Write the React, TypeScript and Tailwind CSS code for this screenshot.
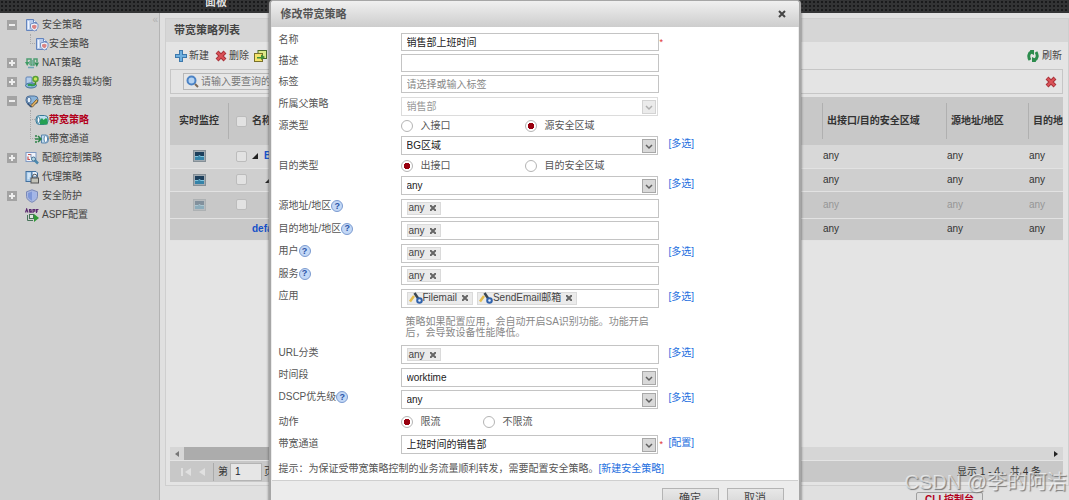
import { ReactNode } from "react";
import clsx from "clsx";

type IconName =
  | "policy"
  | "nat"
  | "balance"
  | "bandwidth"
  | "bwPolicy"
  | "channel"
  | "quota"
  | "proxy"
  | "shield"
  | "aspf";

type TreeNode = {
  label: string;
  icon: IconName;
  state?: "open" | "closed";
  child?: boolean;
  last?: boolean;
  active?: boolean;
};

const tree: TreeNode[] = [
  { label: "安全策略", icon: "policy", state: "open" },
  { label: "安全策略", icon: "policy", child: true, last: true },
  { label: "NAT策略", icon: "nat", state: "closed" },
  { label: "服务器负载均衡", icon: "balance", state: "closed" },
  { label: "带宽管理", icon: "bandwidth", state: "open" },
  { label: "带宽策略", icon: "bwPolicy", child: true, active: true },
  { label: "带宽通道", icon: "channel", child: true, last: true },
  { label: "配额控制策略", icon: "quota", state: "closed" },
  { label: "代理策略", icon: "proxy" },
  { label: "安全防护", icon: "shield", state: "closed" },
  { label: "ASPF配置", icon: "aspf" },
];

const iconShapes: Record<IconName, ReactNode> = {
  policy: (
    <>
      <path d="M1.500 1.500h7l3 3v8h-10z" fill="#b5caec" stroke="#6384bd" />
      <path d="M8.500 1.500v3h3" fill="#f4f8ff" stroke="#6384bd" />
      <path d="M3.500 3v8" stroke="#f1f6ff" strokeWidth="1.500" />
      <path d="M5.500 6l4-1 3.500 1v3c0 2-2 3-3.500 4-2-1-4-2-4-4z" fill="#eef2fa" stroke="#7a92c4" />
      <path d="M7 7.500l2.500-.8 2 .8v1.300c0 1.200-1 1.800-2 2.500-1.300-.7-2.500-1.300-2.500-2.500z" fill="#d98484" />
    </>
  ),
  nat: (
    <>
      <path d="M2 7V3h4v6h3V3h3v3" fill="none" stroke="#4d9d70" strokeWidth="1.500" />
      <path d="M0 6h4.500L2.200 10z" fill="#3f9c64" />
      <path d="M9.500 6.500H14L11.800 11z" fill="#2f8a55" />
      <path d="M3 11.500h6" stroke="#6fa7b5" strokeWidth="1.500" />
      <path d="M4.500 5v4M7.500 4v6" stroke="#79b3a0" />
    </>
  ),
  balance: (
    <>
      <rect x="1" y="2" width="6" height="8" rx="1" fill="#b4cdeb" stroke="#5f83b5" />
      <ellipse cx="6" cy="10.500" rx="5.500" ry="2.500" fill="#8db8dd" stroke="#3f6f9a" />
      <path d="M3 10.500c2-2 4 1 7-1" fill="none" stroke="#2f9a4a" strokeWidth="2" />
      <circle cx="10.500" cy="4" r="2.500" fill="#cbe55a" stroke="#58a035" strokeWidth="1.500" />
      <path d="M10.500 7v3" stroke="#4b8a22" strokeWidth="1.500" />
    </>
  ),
  bandwidth: (
    <>
      <rect x="1" y="2" width="12" height="8" rx="3.500" fill="#8ab4da" stroke="#4f7099" />
      <ellipse cx="4" cy="6" rx="2" ry="3" fill="#e2effb" stroke="#4f7099" />
      <path d="M5 12.500l6.500-7L13 7l-5.500 6z" fill="#e3b262" stroke="#7d6338" />
      <path d="M2.500 9.500l4 3.500" stroke="#2f4f78" strokeWidth="1.500" />
    </>
  ),
  bwPolicy: (
    <>
      <rect x="1" y="2.500" width="12" height="9" rx="3.500" fill="#bfe0f0" stroke="#3a7a98" />
      <path d="M5 11.500V7l2-2 1.500 2L11 5l1.500 1.500v5z" fill="#25a052" />
      <ellipse cx="3.500" cy="7" rx="1.500" ry="3" fill="#fff" stroke="#3a7a98" />
    </>
  ),
  channel: (
    <>
      <path d="M6.500 3H11a2.500 4 0 0 1 0 8H6.500z" fill="#c2dcf0" stroke="#5a86ad" />
      <ellipse cx="10.800" cy="7" rx="1.800" ry="3.500" fill="#fff" stroke="#5a86ad" />
      <path d="M0 4h2M0 10h2M0 7h6M3 4l3 3-3 3" fill="none" stroke="#2c8247" strokeWidth="1.500" />
    </>
  ),
  quota: (
    <>
      <rect x="1" y="1.500" width="10" height="9" fill="#f1f4fa" stroke="#7f9ac4" />
      <path d="M3 3.500h3M3 5.500v3h2" fill="none" stroke="#c65252" strokeWidth="1.200" />
      <path d="M6 3v3.500h3" fill="none" stroke="#8296b8" />
      <path d="M8 7.500l5 5" stroke="#4b88ad" strokeWidth="2.500" />
      <circle cx="8.500" cy="8" r="2" fill="#b5d8e8" stroke="#4b7695" />
    </>
  ),
  proxy: (
    <>
      <rect x="1" y="1.500" width="6" height="10" fill="#a8cbea" stroke="#41709f" />
      <path d="M2.500 4h3M2.500 6h3M2.500 8h2" stroke="#fff" />
      <path d="M7 1.500h4l1.500 1.500v4H7z" fill="#e7f0fa" stroke="#41709f" />
      <rect x="6" y="8" width="7.500" height="5" fill="#c2c2b8" stroke="#555" />
      <path d="M7.500 8V6.500a2 2 0 0 1 4.500 0V8" fill="none" stroke="#555" />
    </>
  ),
  shield: (
    <>
      <path d="M7 .800l5.500 2v4.500c0 3-3 5-5.500 6-2.500-1-5.500-3-5.500-6V2.800z" fill="#a9b8e0" stroke="#7a89b8" />
      <path d="M7 2.500l4 1.400v3.400c0 2-2 3.500-4 4.400z" fill="#a3b6e8" />
      <path d="M7 2.500L3 3.900v3.400c0 2 2 3.500 4 4.400z" fill="#7e97d8" />
    </>
  ),
  aspf: (
    <>
      <path d="M.5 4.500L1.700 1l1.200 3.500M6.500 1.500h-2v1.300h1.800v1.400H4.300M8 5V1.500h1.800v1.600H8M11.500 5V1.500h2M11.500 3H13" fill="none" stroke="#5b2a70" strokeWidth="1.200" />
      <path d="M2.500 7v5.500H8" fill="none" stroke="#48735a" />
      <rect x="4.500" y="6.500" width="4" height="4" fill="#dfe9df" stroke="#48735a" />
      <path d="M9 6l5 4-5 4z" fill="#2f9a35" />
    </>
  ),
};

function TreeIcon({ name }: { name: IconName }) {
  return (
    <svg viewBox="0 0 14 14" className="size-[14px] shrink-0" aria-hidden="true">
      {iconShapes[name]}
    </svg>
  );
}

function Sidebar() {
  return (
    <nav className="relative w-[160px] shrink-0 border-r border-[#b4b4b4] bg-[#d0d0d0] pt-[2px]">
      <button
        type="button"
        aria-label="收起"
        className="absolute top-[2px] right-[1px] text-[10px] leading-[10px] text-[#b0b0b0]"
      >
        «
      </button>
      <ul>
        {tree.map((n, i) => (
          <li key={i} className="flex h-[19px] items-center pl-[7px]">
            {n.child ? (
              <span className="flex h-full w-[28px] flex-col items-end pl-[23px]">
                <span className="h-1/2 w-full border-b border-l border-dotted border-[#aaa]" />
                <span
                  className={clsx(
                    "h-1/2 w-full border-l border-dotted",
                    n.last ? "border-transparent" : "border-[#aaa]"
                  )}
                />
              </span>
            ) : (
              <span className="flex w-[18px]">
                {n.state && (
                  <button
                    type="button"
                    aria-label={n.state === "open" ? "折叠" : "展开"}
                    className="size-[10px] bg-[#a3a3a3]"
                  >
                    <svg viewBox="0 0 10 10" className="size-[10px]">
                      <path
                        d={n.state === "open" ? "M2 5h6" : "M2 5h6M5 2v6"}
                        stroke="#eee"
                        strokeWidth="2"
                      />
                    </svg>
                  </button>
                )}
              </span>
            )}
            <TreeIcon name={n.icon} />
            <a
              href="#"
              className={clsx(
                "whitespace-nowrap",
                !n.child && "pl-[3px]",
                n.active ? "font-bold text-[#b3001b]" : "text-[#444]"
              )}
            >
              {n.label}
            </a>
          </li>
        ))}
      </ul>
    </nav>
  );
}

function RedCross() {
  return (
    <svg viewBox="0 0 12 12" className="size-[12px]" aria-hidden="true">
      <path d="M2 2l8 8M10 2l-8 8" stroke="#a8323a" strokeWidth="4" />
      <path d="M2.500 2.500l7 7M9.500 2.500l-7 7" stroke="#dc5358" strokeWidth="2" />
    </svg>
  );
}

type RowData = { name?: string; level: number; dim?: boolean; height: string; bg: string };

const rows: RowData[] = [
  { name: "BG区域", level: 0, height: "h-[23px]", bg: "bg-[#d8d8d8]" },
  { name: "销售部", level: 1, height: "h-[23px]", bg: "bg-[#cfcfcf]" },
  { name: "", level: 2, dim: true, height: "h-[27px]", bg: "bg-[#c8c8c8]" },
  { name: "default", level: -1, height: "h-[22px]", bg: "bg-[#c8c8c8]" },
];

function Monitor({ dim }: { dim?: boolean }) {
  return (
    <svg
      viewBox="0 0 13 12"
      className={clsx("mx-auto h-[12px] w-[13px]", dim && "opacity-40")}
      aria-hidden="true"
    >
      <rect x=".5" y=".5" width="12" height="11" fill="#a2abb2" stroke="#858f96" />
      <rect x="2" y="2" width="9" height="8" fill="#1c3f5c" />
      <path d="M2 6h9v4H2z" fill="#3583a8" />
      <path d="M2 6.500h3l1-1 2 1h3" fill="none" stroke="#7fc4dd" />
    </svg>
  );
}

function HeadCell({ children }: { children: ReactNode }) {
  return (
    <th className="p-0 text-left font-bold">
      <span className="flex h-[36px] items-center overflow-hidden border-l border-[#b0b0b0] pl-1 whitespace-nowrap">
        {children}
      </span>
    </th>
  );
}

function PolicyTable() {
  return (
    <div className="overflow-hidden">
      <table className="w-[calc(100%+60px)] table-fixed border-collapse text-[#333]">
        <colgroup>
          <col className="w-[58px]" />
          <col />
          <col className="w-[124px]" />
          <col className="w-[82px]" />
          <col className="w-[95px]" />
        </colgroup>
        <thead>
          <tr className="h-[48px] bg-[#c8c8c8]">
            <th className="p-0 text-center font-bold">实时监控</th>
            <th className="p-0 text-left font-bold">
              <span className="flex h-[36px] items-center gap-[5px] border-l border-[#b0b0b0] pl-[7px]">
                <Check label="全选" />
                名称
              </span>
            </th>
            <HeadCell>出接口/目的安全区域</HeadCell>
            <HeadCell>源地址/地区</HeadCell>
            <HeadCell>目的地址/地区</HeadCell>
          </tr>
        </thead>
        <tbody>
          {rows.map((r, i) => (
            <tr key={i} className={clsx("border-b border-[#e2e2e2]", r.height, r.bg)}>
              <td className="p-0">{r.level >= 0 && <Monitor dim={r.dim} />}</td>
              <td className="p-0">
                <span className="flex items-center pl-[8px]">
                  {r.level >= 0 ? (
                    <Check label={`选择 ${r.name}`} />
                  ) : (
                    <span className="w-[10px]" />
                  )}
                  {(r.level === 0 || r.level === 1) && (
                    <svg
                      viewBox="0 0 6 6"
                      className={clsx("size-[6px]", r.level === 0 ? "ml-[5px]" : "ml-[18px]")}
                      aria-hidden="true"
                    >
                      <path d="M6 0v6H0z" fill="#222" />
                    </svg>
                  )}
                  <a href="#" className="pl-[6px] font-bold text-[#1450c8]">
                    {r.name}
                  </a>
                </span>
              </td>
              {[0, 1, 2].map((c) => (
                <td key={c} className={clsx("p-0 pl-px", r.dim && "text-[#969696]")}>
                  any
                </td>
              ))}
            </tr>
          ))}
        </tbody>
      </table>
    </div>
  );
}

function Check({ label }: { label: string }) {
  return (
    <input
      type="checkbox"
      aria-label={label}
      className="size-[11px] shrink-0 appearance-none rounded-[2px] border border-[#bcbcbc] bg-[#e2e2e2]"
    />
  );
}

function ListPanel() {
  return (
    <main className="flex min-w-0 flex-1 flex-col bg-[#e0e0e0] pl-[5px]">
      <section className="mt-[5px] flex min-h-0 flex-1 flex-col border border-[#cfcfcf] bg-[#e4e4e4]">
        <h1 className="h-[23px] shrink-0 bg-[#d6d6d6] pl-[8px] text-[11px] leading-[23px] font-bold text-[#444]">
          带宽策略列表
        </h1>
        <div className="flex h-[27px] shrink-0 items-center pr-[6px] pl-[9px] text-[#444]">
          <button type="button" className="flex items-center gap-[2px] whitespace-nowrap">
            <svg viewBox="0 0 12 12" className="size-[12px]" aria-hidden="true">
              <path d="M6 0v12M0 6h12" stroke="#3d79ad" strokeWidth="4" />
              <path d="M6 1v10M1 6h10" stroke="#6fb0df" strokeWidth="2" />
            </svg>
            新建
          </button>
          <button type="button" className="ml-[6px] flex items-center gap-[2px] whitespace-nowrap">
            <RedCross />
            删除
          </button>
          <button type="button" className="ml-[5px] flex items-center gap-[3px] whitespace-nowrap">
            <svg viewBox="0 0 13 12" className="h-[12px] w-[13px]" aria-hidden="true">
              <rect x="4" y=".5" width="8.500" height="8" fill="#dce98a" stroke="#4b6b2f" />
              <rect x=".5" y="3.500" width="8" height="8" fill="#f3e36a" stroke="#78702a" />
              <path d="M3 7h4V4.500L11 7 7 10V8.500H3z" fill="#3f8f3a" />
            </svg>
            复制
          </button>
          <button type="button" className="ml-auto flex items-center gap-[3px] whitespace-nowrap">
            <svg viewBox="0 0 12 12" className="size-[12px]" aria-hidden="true">
              <path d="M4.500 2C1.500 3 1 7 3 10M7.500 10C10.500 9 11 5 9 2" fill="none" stroke="#2c8c4d" strokeWidth="3" />
              <path d="M3 0h4v5L4 3.500zM9 12H5V7l3 1.500z" fill="#2c8c4d" />
            </svg>
            刷新
          </button>
        </div>
        <div className="mr-[5px] ml-1 flex h-[25px] shrink-0 items-center border border-[#c6c6c6] pr-[5px] pl-[12px]">
          <label className="flex h-[17px] items-center gap-[2px] border border-[#b8b8b8] bg-[#e6e6e6] pl-[2px]">
            <svg viewBox="0 0 13 13" className="size-[13px]" aria-hidden="true">
              <circle cx="5.500" cy="5.500" r="4" fill="#b5d3f2" stroke="#4c83c5" strokeWidth="2" />
              <path d="M9 9l3 3" stroke="#7c6a58" strokeWidth="2" />
            </svg>
            <input
              type="text"
              aria-label="查询"
              placeholder="请输入要查询的内容"
              className="w-[180px] bg-transparent placeholder:text-[#777]"
            />
          </label>
          <button type="button" aria-label="清除" className="ml-auto">
            <RedCross />
          </button>
        </div>
        <div className="mt-[3px] mr-[5px] ml-1 flex min-h-0 flex-1 flex-col">
          <PolicyTable />
          <div className="mt-auto flex h-[13px] shrink-0 bg-[#d6d6d6]">
            <button type="button" aria-label="向左滚动" className="flex w-[14px] items-center justify-center">
              <svg viewBox="0 0 4 6" className="h-[6px] w-[4px]">
                <path d="M4 0v6L0 3z" fill="#777" />
              </svg>
            </button>
            <div className="w-3/5 bg-[#acacac]" />
            <button type="button" aria-label="向右滚动" className="ml-auto flex w-[14px] items-center justify-center">
              <svg viewBox="0 0 4 6" className="h-[6px] w-[4px]">
                <path d="M0 0v6l4-3z" fill="#222" />
              </svg>
            </button>
          </div>
          <div className="mt-px mb-[3px] flex h-[21px] shrink-0 items-center bg-[#c8c8c8] pr-[22px] pl-[11px] text-[#333]">
            <button type="button" aria-label="首页">
              <svg viewBox="0 0 10 8" className="h-[8px] w-[10px]">
                <path d="M1 0v8" stroke="#e0e0e0" strokeWidth="2" />
                <path d="M10 0v8L4 4z" fill="#e0e0e0" />
              </svg>
            </button>
            <button type="button" aria-label="上一页" className="ml-[8px]">
              <svg viewBox="0 0 6 8" className="h-[8px] w-[6px]">
                <path d="M6 0v8L0 4z" fill="#e0e0e0" />
              </svg>
            </button>
            <label className="ml-[8px] flex items-center gap-[2px] border-l border-[#aaa] pl-[4px]">
              第
              <input
                type="text"
                defaultValue="1"
                className="h-[18px] w-[32px] border border-[#b4b4b4] bg-[#e6e6e6] pl-[4px] text-[#223]"
              />
              页
            </label>
            <span className="ml-auto">显示 1 - 4，共 4 条</span>
          </div>
        </div>
      </section>
      <footer className="flex h-[14px] shrink-0 justify-end overflow-hidden pt-[6px] pr-[86px]">
        <button
          type="button"
          className="h-[16px] shrink-0 rounded-[2px] border border-[#a0a0a0] bg-[#dedede] px-[8px] text-[10px] leading-[14px] font-bold whitespace-nowrap text-[#b3001b]"
        >
          CLI 控制台
        </button>
      </footer>
    </main>
  );
}

function HelpIcon() {
  return (
    <button
      type="button"
      aria-label="帮助"
      className="flex size-[12px] items-center justify-center rounded-full border border-[#7c9bd0] bg-[#c3d8f6] text-[9px] leading-[9px] font-bold text-[#2c55a8]"
    >
      ?
    </button>
  );
}

type FieldRowProps = {
  id?: string;
  label?: string;
  help?: boolean;
  link?: string;
  required?: boolean;
  height?: string;
  flat?: boolean;
  children: ReactNode;
};

function FieldRow({ id, label, help, link, required, height, flat, children }: FieldRowProps) {
  return (
    <div className={clsx("flex items-center", height ?? "h-[22px]")}>
      <div className={clsx("flex w-[122px] shrink-0 items-center", !flat && "pb-1")}>
        {label &&
          (id ? (
            <label htmlFor={id}>{label}</label>
          ) : (
            <span>{label}</span>
          ))}
        {help && <HelpIcon />}
      </div>
      <div className="w-[258px] shrink-0">{children}</div>
      <span className="w-[10px] shrink-0 pl-px text-[9px] text-[#e03030]">
        {required && "*"}
      </span>
      {link && (
        <a href="#" className="pb-[3px] text-[#1e6fe0]">
          [{link}]
        </a>
      )}
    </div>
  );
}

function TextField({ id, value, placeholder }: { id: string; value?: string; placeholder?: string }) {
  return (
    <input
      id={id}
      type="text"
      defaultValue={value}
      placeholder={placeholder}
      className="block h-[18px] w-full border border-[#c4c4c4] bg-white px-[5px] text-[#222] placeholder:text-[#888]"
    />
  );
}

type SelectProps = { id?: string; name?: string; value: string; disabled?: boolean };

function SelectField({ id, name, value, disabled }: SelectProps) {
  return (
    <div className="relative mr-px">
      <select
        id={id}
        aria-label={name}
        disabled={disabled}
        className={clsx(
          "block h-[19px] w-full appearance-none border bg-white px-[5px] leading-[17px]",
          disabled ? "border-[#dcdcdc] text-[#999]" : "border-[#c4c4c4] text-[#222]"
        )}
      >
        <option>{value}</option>
      </select>
      <svg
        viewBox="0 0 14 14"
        className={clsx(
          "pointer-events-none absolute top-[3px] right-[2px] size-[14px]",
          disabled && "opacity-50"
        )}
        aria-hidden="true"
      >
        <rect x=".5" y=".5" width="13" height="13" fill="#d9d9d9" stroke="#a8a8a8" />
        <path d="M4 6l3 3 3-3" fill="none" stroke="#606060" strokeWidth="1.500" />
      </svg>
    </div>
  );
}

function AppIcon() {
  return (
    <svg viewBox="0 0 14 12" className="h-[12px] w-[14px]" aria-hidden="true">
      <path d="M1 9.500l4-5.500" fill="none" stroke="#e5bd4c" strokeWidth="2.500" />
      <path d="M5.500 1l4 6" stroke="#3b4650" strokeWidth="2.500" />
      <circle cx="10.500" cy="8.500" r="2.300" fill="#e8f0fa" stroke="#2f62ad" strokeWidth="2" />
    </svg>
  );
}

function TagField({ id, tags, icon }: { id: string; tags: string[]; icon?: boolean }) {
  return (
    <div className="flex h-[19px] items-center gap-1 border border-[#c4c4c4] bg-white pl-[5px]">
      {tags.map((t) => (
        <span
          key={t}
          className="flex h-[13px] shrink-0 items-center border border-[#dadada] bg-[#ebebeb] px-px text-[#444]"
        >
          {icon && <AppIcon />}
          {t}
          <button type="button" aria-label={`移除 ${t}`} className="pr-[3px] pl-[5px]">
            <svg viewBox="0 0 6 6" className="size-[6px]">
              <path d="M0 0l6 6M6 0L0 6" stroke="#666" strokeWidth="2" />
            </svg>
          </button>
        </span>
      ))}
      <input id={id} type="text" className="min-w-0 flex-1" />
    </div>
  );
}

type RadioProps = { name: string; options: string[]; checked: number; width: string };

function RadioGroup({ name, options, checked, width }: RadioProps) {
  return (
    <div className="flex">
      {options.map((o, i) => (
        <label key={o} className={clsx("flex shrink-0 items-center gap-[8px]", width)}>
          <input
            type="radio"
            name={name}
            defaultChecked={i === checked}
            className="size-[12px] appearance-none rounded-full border border-[#b4b4b4] bg-white checked:bg-[radial-gradient(circle,#98000f_0_3px,#fff_3px)]"
          />
          {o}
        </label>
      ))}
    </div>
  );
}

function PolicyDialog() {
  return (
    <div
      role="dialog"
      aria-label="修改带宽策略"
      className="absolute top-0 left-1/2 w-[532px] -translate-x-1/2 rounded-t-[4px] border-x-2 border-t border-[#a6a6a6] bg-[#ececec] shadow-[0_0_3px_#555]"
    >
      <header className="flex h-[26px] items-center justify-between rounded-t-[3px] bg-linear-to-b from-[#f0f0f0] to-[#cdcdcd] pr-[13px] pl-[10px]">
        <h2 className="text-[11px] font-bold text-[#555]">修改带宽策略</h2>
        <button type="button" aria-label="关闭">
          <svg viewBox="0 0 8 8" className="size-[8px]">
            <path d="M1 1l6 6M7 1L1 7" stroke="#444" strokeWidth="2" />
          </svg>
        </button>
      </header>
      <form className="mx-px border-b border-[#cfcfcf] bg-white pt-1 pl-[7px] text-[#555]">
        <FieldRow id="name" label="名称" height="h-[21px]" required>
          <TextField id="name" value="销售部上班时间" />
        </FieldRow>
        <FieldRow id="desc" label="描述" height="h-[21px]">
          <TextField id="desc" />
        </FieldRow>
        <FieldRow id="tag" label="标签">
          <TextField id="tag" placeholder="请选择或输入标签" />
        </FieldRow>
        <FieldRow id="parent" label="所属父策略">
          <SelectField id="parent" value="销售部" disabled />
        </FieldRow>
        <FieldRow label="源类型" height="h-[17px]" flat>
          <RadioGroup name="src" options={["入接口", "源安全区域"]} checked={1} width="w-[124px]" />
        </FieldRow>
        <FieldRow height="h-[23px]" link="多选">
          <SelectField name="源安全区域" value="BG区域" />
        </FieldRow>
        <FieldRow label="目的类型" height="h-[17px]" flat>
          <RadioGroup name="dst" options={["出接口", "目的安全区域"]} checked={0} width="w-[124px]" />
        </FieldRow>
        <FieldRow height="h-[23px]" link="多选">
          <SelectField name="出接口" value="any" />
        </FieldRow>
        <FieldRow id="srcAddr" label="源地址/地区" help>
          <TagField id="srcAddr" tags={["any"]} />
        </FieldRow>
        <FieldRow id="dstAddr" label="目的地址/地区" height="h-[23px]" help>
          <TagField id="dstAddr" tags={["any"]} />
        </FieldRow>
        <FieldRow id="user" label="用户" link="多选" help>
          <TagField id="user" tags={["any"]} />
        </FieldRow>
        <FieldRow id="service" label="服务" height="h-[23px]" help>
          <TagField id="service" tags={["any"]} />
        </FieldRow>
        <FieldRow id="app" label="应用" link="多选">
          <TagField id="app" tags={["Filemail", "SendEmail邮箱"]} icon />
        </FieldRow>
        <p className="ml-[127px] h-[34px] w-[244px] pt-[7px] leading-[11px] text-[#888]">
          策略如果配置应用，会自动开启SA识别功能。功能开启后，会导致设备性能降低。
        </p>
        <FieldRow id="url" label="URL分类" height="h-[23px]" link="多选">
          <TagField id="url" tags={["any"]} />
        </FieldRow>
        <FieldRow id="time" label="时间段">
          <SelectField id="time" value="worktime" />
        </FieldRow>
        <FieldRow id="dscp" label="DSCP优先级" link="多选" help>
          <SelectField id="dscp" value="any" />
        </FieldRow>
        <FieldRow label="动作" height="h-[23px]" flat>
          <RadioGroup name="action" options={["限流", "不限流"]} checked={0} width="w-[82px]" />
        </FieldRow>
        <FieldRow id="channel" label="带宽通道" link="配置" required flat>
          <SelectField id="channel" value="上班时间的销售部" />
        </FieldRow>
        <p className="h-[25px] pt-[8px] whitespace-nowrap">
          提示：为保证受带宽策略控制的业务流量顺利转发，需要配置安全策略。
          <a href="#" className="text-[#1e6fe0]">
            [新建安全策略]
          </a>
        </p>
      </form>
      <div className="flex justify-end gap-[8px] pt-[7px] pr-[15px] pb-[8px]">
        {["确定", "取消"].map((b) => (
          <button
            key={b}
            type="button"
            className="h-[20px] w-[57px] border border-[#b4b4b4] bg-linear-to-b from-[#e8e8e8] to-[#d4d4d4] text-[11px] text-[#444]"
          >
            {b}
          </button>
        ))}
      </div>
    </div>
  );
}

export default function App() {
  return (
    <div className="relative flex h-screen flex-col overflow-hidden bg-[#e0e0e0] font-['Liberation_Sans','Noto_Sans_CJK_SC',sans-serif] text-[10px] leading-[12px]">
      <header className="flex h-[13px] shrink-0 items-end overflow-hidden bg-[#333435] bg-[radial-gradient(#191a1b_1px,transparent_1px)] bg-size-[4px_4px] pb-[5px] pl-[205px]">
        <a href="#" className="text-[11px] leading-[12px] font-bold text-[#ddd]">
          面板
        </a>
      </header>
      <div className="flex min-h-0 flex-1">
        <Sidebar />
        <ListPanel />
      </div>
      <PolicyDialog />
      <div className="pointer-events-none absolute right-[2px] bottom-[6px] text-[20px] leading-[24px] whitespace-nowrap text-white/60 [text-shadow:1px_1px_1px_#777]">
        CSDN @李的阿洁
      </div>
    </div>
  );
}
